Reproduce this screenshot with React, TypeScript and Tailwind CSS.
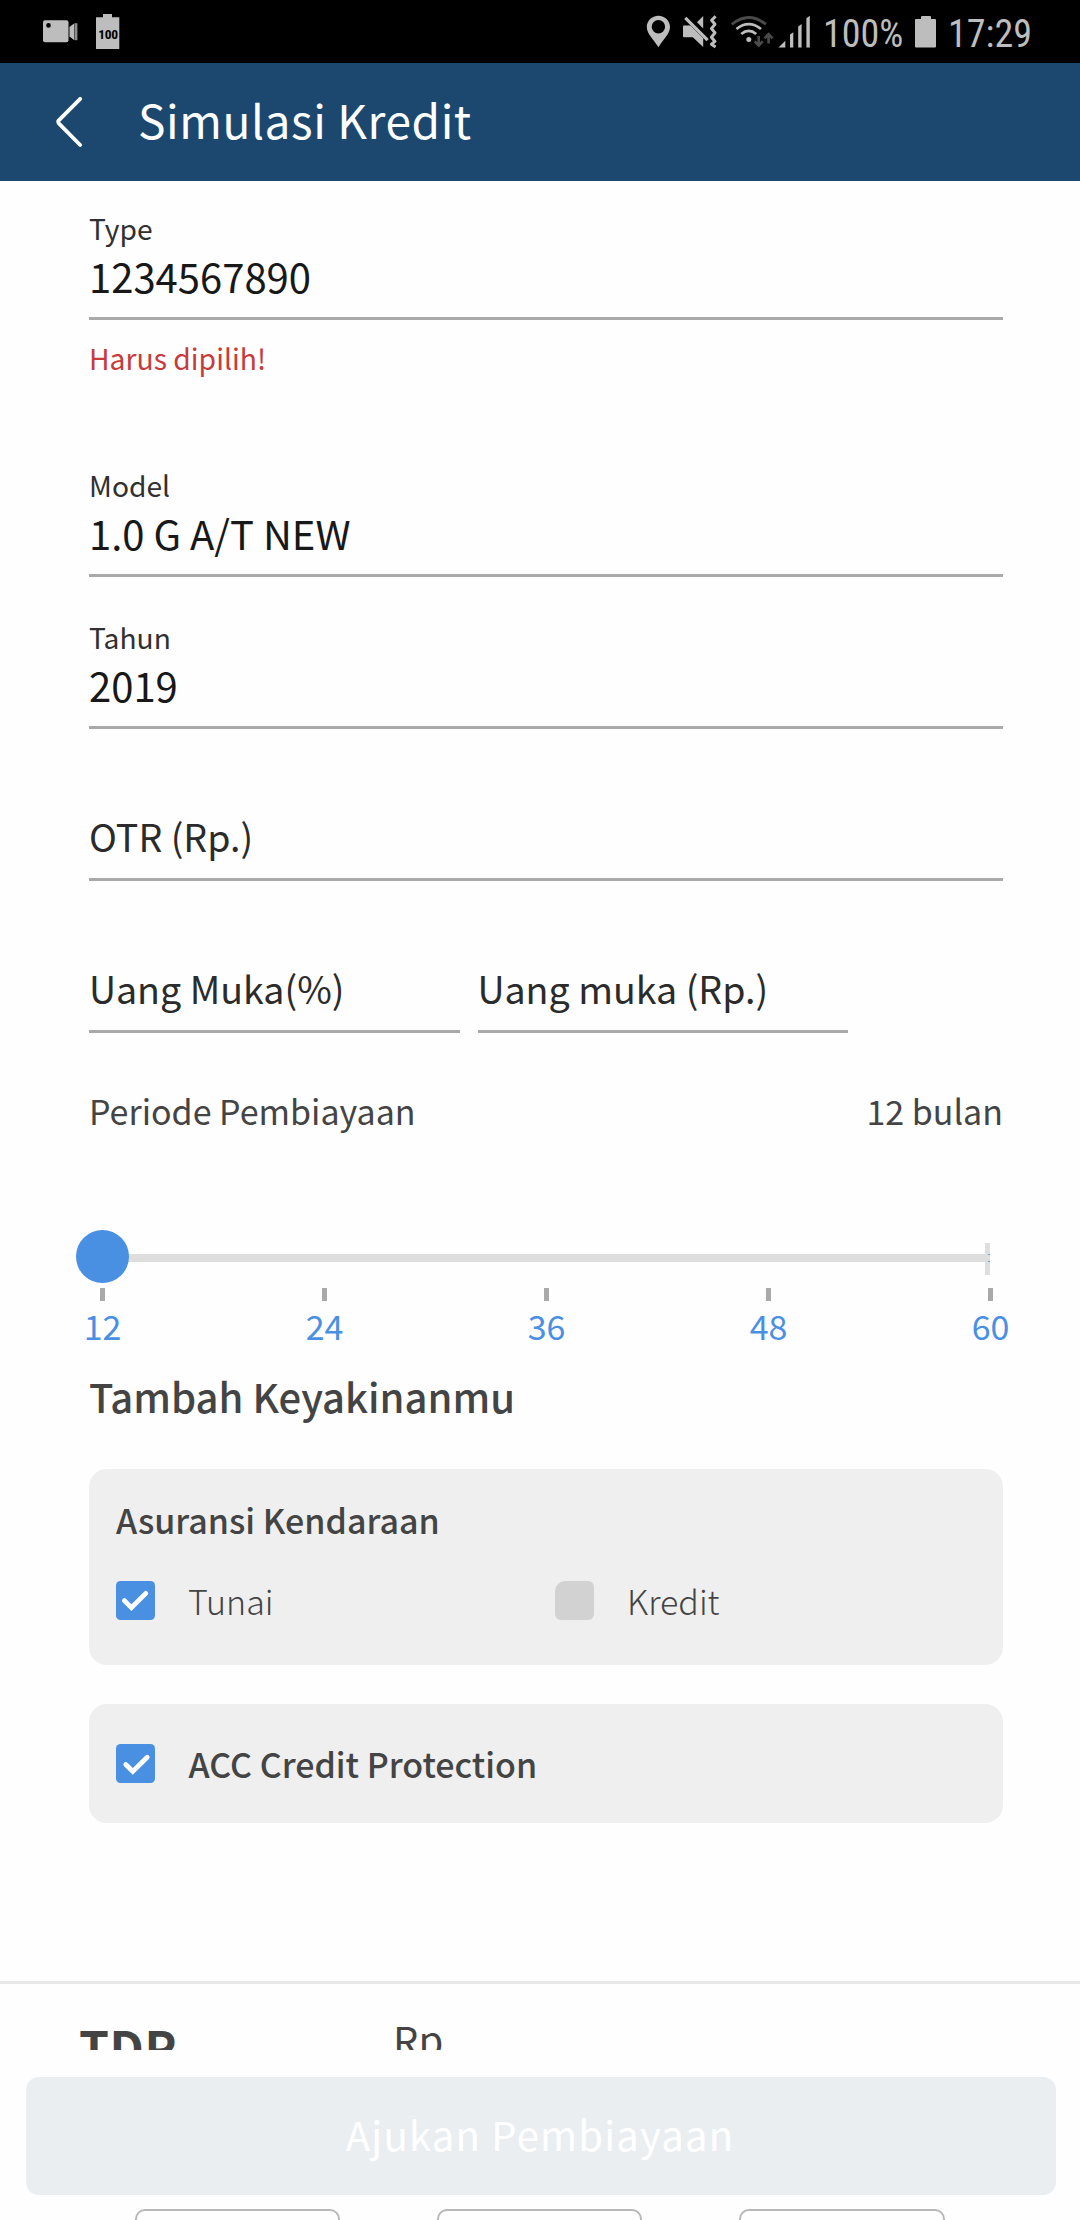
import React from "react";

const STATUS = "#bdbdbd";
const STATUS_DIM = "#4a4a4a";

function StatusBar() {
  return (
    <div className="flex h-[63px] w-full items-start bg-black text-[#bdbdbd]">
      <svg className="ml-[40px] h-[63px] w-[40px]" viewBox="40 0 40 63" fill={STATUS}>
        <rect x="43" y="20.3" width="25.5" height="22" rx="2" />
        <path d="M69.5 27 L74 23.5 V40 L69.5 36.5 Z" />
        <path d="M74.4 23.2 H77.4 V40.2 H74.4 Z" opacity="0.75" />
        <circle cx="48.5" cy="25.4" r="2.3" fill="#000" />
      </svg>
      <div className="ml-[16px] grid h-[63px] w-[24px] grid-cols-1 grid-rows-1">
        <svg className="col-start-1 row-start-1 h-[63px] w-[24px]" viewBox="96 0 24 63" fill={STATUS}>
          <path d="M96 17.3 H103 V14 H112 V17.3 H119.3 V49 H96 Z" />
        </svg>
        <span className="col-start-1 row-start-1 mt-[24.5px] text-center font-['Roboto_Condensed','Roboto',sans-serif] text-[13.5px] leading-[18px] font-bold tracking-[-0.4px] text-black">
          100
        </span>
      </div>

      <svg className="ml-[526px] h-[63px] w-[26px]" viewBox="646 0 26 63" fill={STATUS}>
        <path
          fillRule="evenodd"
          d="M658.4 15.7 C664.9 15.7 670 20.8 670 27 C670 34 663 39.5 658.4 47.2 C653.8 39.5 646.8 34 646.8 27 C646.8 20.8 651.9 15.7 658.4 15.7 Z M658.4 20 A6.7 6.7 0 1 0 658.4 33.4 A6.7 6.7 0 1 0 658.4 20 Z"
        />
      </svg>
      <svg className="ml-[10px] h-[63px] w-[36px]" viewBox="682 0 36 63" fill={STATUS}>
        <path d="M683 26.5 Q683 25.5 684 25.5 H690.5 L703.2 38.2 V47 L692.8 37.2 H684 Q683 37.2 683 36.2 Z" />
        <path d="M703.2 16 V28.5 L697 22.3 Z" />
        <path d="M685.3 17.8 L707.6 40.1" stroke={STATUS} strokeWidth="3.2" fill="none" />
        <path
          d="M715.6 16.3 L711.6 20.2 L715 24.2 L711.4 28.6 L715 32.8 L711.4 37.2 L715 41.4 L711.4 44.2 L715.6 47"
          stroke={STATUS}
          strokeWidth="3"
          strokeLinejoin="round"
          fill="none"
        />
      </svg>
      <svg className="ml-[12px] h-[63px] w-[44px]" viewBox="730 0 44 63" fill="none">
        <path d="M731.8 24.3 Q748.7 10.5 765.8 24.3" stroke={STATUS_DIM} strokeWidth="2.9" />
        <path d="M736.4 29 Q748.7 19.4 761 29" stroke={STATUS} strokeWidth="2.7" />
        <path d="M741.2 34 Q748.7 27.8 756.2 34" stroke={STATUS} strokeWidth="2.7" />
        <circle cx="748.8" cy="39.4" r="2.5" fill={STATUS} />
        <path d="M758.7 36 V45 M754.7 41.3 L758.7 45.5 L762.7 41.3" stroke={STATUS_DIM} strokeWidth="2.6" />
        <path d="M768.6 43.6 V35 M764.6 38.4 L768.6 34.2 L772.6 38.4" stroke={STATUS_DIM} strokeWidth="2.6" />
      </svg>
      <svg className="ml-[4px] h-[63px] w-[34px]" viewBox="778 0 34 63" fill={STATUS}>
        <path d="M778.5 47.4 L785.3 40.8 V47.4 Z" />
        <path d="M790 47.4 V34.5 L793.3 32.2 V47.4 Z" />
        <path d="M798.2 47.4 V26.5 L801.6 24 V47.4 Z" />
        <path d="M806.4 47.4 V18.3 L809.8 15.8 V47.4 Z" />
      </svg>
      <span className="mt-[12px] ml-[11px] w-[80px] font-['Roboto_Condensed','Roboto',sans-serif] text-[38px] leading-[44px] whitespace-nowrap">
        100%
      </span>
      <svg className="ml-[11px] h-[63px] w-[24px]" viewBox="914 0 24 63" fill={STATUS}>
        <path d="M915 20 Q915 19 916 19 H921 V16.8 Q921 16 922 16 H930 Q931 16 931 16.8 V19 H935 Q936 19 936 20 V46.5 Q936 47.5 935 47.5 H916 Q915 47.5 915 46.5 Z" />
      </svg>
      <span className="mt-[12px] ml-[10px] font-['Roboto_Condensed','Roboto',sans-serif] text-[38px] leading-[44px] whitespace-nowrap">
        17:29
      </span>
    </div>
  );
}

function Header() {
  return (
    <div className="flex h-[118px] w-full items-start bg-[#1c4870] text-white">
      <svg className="mt-[30px] ml-[54px] h-[56px] w-[32px]" viewBox="54 93 32 56" fill="none">
        <path
          d="M80.2 98.8 L58.8 120.3 Q57.6 121.8 58.8 123.3 L80.2 145"
          stroke="#fff"
          strokeWidth="3.8"
          strokeLinecap="round"
          strokeLinejoin="round"
        />
      </svg>
      <h1 className="mt-[23px] ml-[52px] text-[46px] leading-[66px] font-normal tracking-[0.58px]">Simulasi Kredit</h1>
    </div>
  );
}

function Field({ label, value }: { label: string; value: string }) {
  return (
    <div className="flex h-[113px] flex-col border-b-[3px] border-[#a9a9a9]">
      <span className="text-[28.2px] leading-[41px] text-[#303030]">{label}</span>
      <span className="-mt-px text-[40px] leading-[58px] text-[#181818]">{value}</span>
    </div>
  );
}

function EmptyField({ label }: { label: string }) {
  return (
    <div className="flex h-[113px] flex-1 items-end border-b-[3px] border-[#a9a9a9] pb-[15px] text-[37.6px] leading-[55px] text-[#2b2b2b]">
      {label}
    </div>
  );
}

function PeriodSlider() {
  return (
    <div>
      <div className="relative h-[53px]">
        <div className="ml-[14px] flex h-full w-[887px] items-center">
          <div className="mt-[3px] h-[8px] flex-1 bg-[#dedede]" />
          <div className="mt-[5px] flex h-[32px] w-[5px] flex-col items-end justify-center bg-[#dedede] pb-[2px]">
            <div className="h-[8px] w-[2px] border-y border-[#6ea3df]" />
          </div>
        </div>
        <div className="absolute top-0 left-[-13px] size-[53px] rounded-full bg-[#4a90e2]" />
      </div>
      <div className="mt-[5px] ml-[-16.5px] flex w-[948px] justify-between">
        {["12", "24", "36", "48", "60"].map((n) => (
          <div key={n} className="flex w-[60px] flex-col items-center">
            <div className="h-[13px] w-[5px] bg-[#a9a9a9]" />
            <span className="text-[34px] leading-[49px] text-[#4a90e2]">{n}</span>
          </div>
        ))}
      </div>
    </div>
  );
}

function Check({ dx = 0 }: { dx?: number }) {
  return (
    <svg className="h-[39px] w-[39px] shrink-0" viewBox="0 0 39 39" fill="none">
      <rect width="39" height="39" rx="4.5" fill="#4a90e2" />
      <path
        d="M8.4 19.6 L15.4 26.6 L29.8 12.4"
        transform={`translate(${dx} ${dx * 0.6})`}
        stroke="#fff"
        strokeWidth="4.8"
        strokeLinecap="round"
        strokeLinejoin="miter"
      />
    </svg>
  );
}

export default function App() {
  return (
    <div className="flex h-[2220px] w-[1080px] flex-col overflow-hidden bg-[#fefefe] font-['Noto_Sans_CJK_SC',sans-serif] text-[#444]">
      <StatusBar />
      <Header />
      <div className="flex flex-col pt-[26px] pr-[77px] pl-[89px]">
        <Field label="Type" value="1234567890" />
        <span className="mt-[17px] text-[28.3px] leading-[41px] text-[#c63b3b]">Harus dipilih!</span>
        <div className="mt-[86px] flex flex-col gap-[39px]">
          <Field label="Model" value="1.0 G A/T NEW" />
          <Field label="Tahun" value="2019" />
          <div className="flex">
            <EmptyField label="OTR (Rp.)" />
          </div>
          <div className="flex w-[759px] gap-[18px]">
            <EmptyField label="Uang Muka(%)" />
            <EmptyField label="Uang muka (Rp.)" />
          </div>
        </div>
        <div className="mt-[53px] mb-[95px] flex justify-between text-[34px] leading-[49px]">
          <span>Periode Pembiayaan</span>
          <span>12 bulan</span>
        </div>
        <PeriodSlider />
        <h2 className="mt-[17px] text-[40px] leading-[58px] font-medium">Tambah Keyakinanmu</h2>
        <div className="mt-[44px] h-[196px] rounded-[18px] bg-[#efefef] pt-[26px] pl-[27px] text-[34px] leading-[49px]">
          <h3 className="font-medium">Asuransi Kendaraan</h3>
          <div className="mt-[32px] flex font-light">
            <div className="flex w-[439px] items-center gap-[33px]">
              <Check />
              <span>Tunai</span>
            </div>
            <div className="flex items-center gap-[33px]">
              <div className="size-[39px] rounded-[6px] rounded-tl-[10px] bg-[#d2d2d2]" />
              <span>Kredit</span>
            </div>
          </div>
        </div>
        <div className="mt-[39px] flex h-[119px] items-center gap-[33px] rounded-[18px] bg-[#efefef] pl-[27px] text-[34px] leading-[49px] font-medium">
          <Check dx={1.4} />
          <span className="pl-[0.5px]">ACC Credit Protection</span>
        </div>
      </div>
      <div className="mt-[158px] flex h-[69px] shrink-0 items-start overflow-hidden border-t-[3px] border-[#e9e9e9] pl-[79px]">
        <span className="mt-[27px] w-[314px] text-[48px] leading-[70px] font-bold tracking-[0.6px]">TDP</span>
        <span className="mt-[26px] text-[40px] leading-[58px]">Rp</span>
      </div>
      <button className="mt-[27px] mr-[24px] ml-[26px] flex h-[118px] shrink-0 items-center justify-center rounded-[13px] bg-[#eaeef1] pr-[2px] pb-[4px] text-[40px] leading-[58px] tracking-[1.2px] text-white">
        Ajukan Pembiayaan
      </button>
      <div className="mt-[14px] flex h-[11px] gap-[97px] overflow-hidden pl-[134.8px]">
        {[0, 1, 2].map((i) => (
          <div key={i} className="h-[60px] w-[205.3px] shrink-0 rounded-[10px] border-2 border-[#b8b8b8]" />
        ))}
      </div>
    </div>
  );
}
